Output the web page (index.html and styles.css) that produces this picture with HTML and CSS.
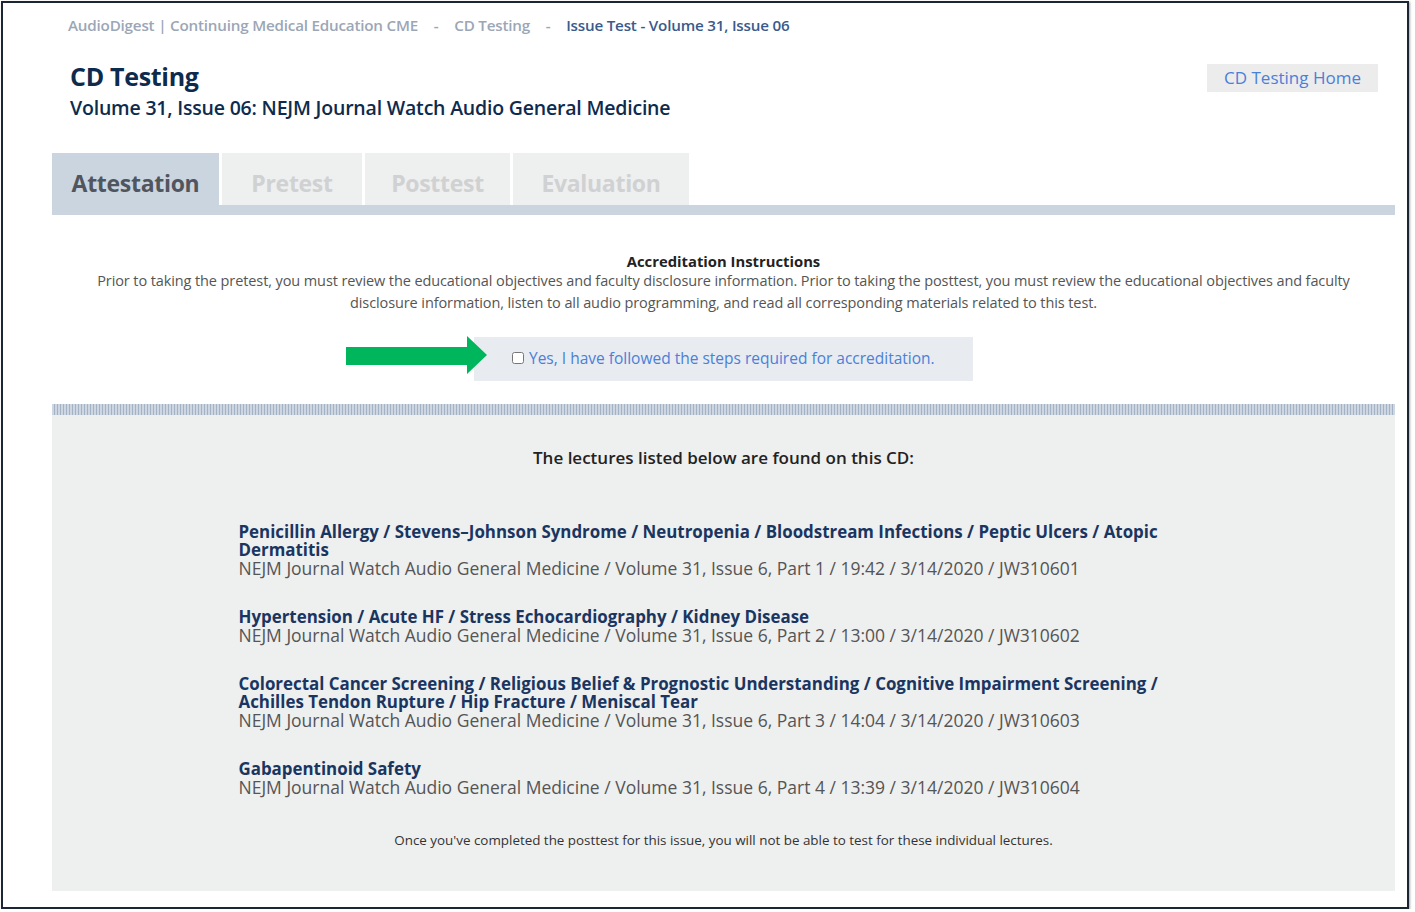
FILE: index.html
```html
<!DOCTYPE html>
<html lang="en">
<head>
  <meta charset="UTF-8" />
  <meta name="viewport" content="width=device-width, initial-scale=1" />
  <title>Issue Test | CD Testing</title>
  <link rel="stylesheet" href="styles.css">
</head>
<body>
  <div class="frame">
    <div class="page">
      <nav class="crumbs">
        <a href="#">AudioDigest | Continuing Medical Education CME</a>
        <span class="sep">-</span>
        <a href="#">CD Testing</a>
        <span class="sep">-</span>
        <a href="#" class="current">Issue Test - Volume 31, Issue 06</a>
      </nav>

      <header class="head">
        <div>
          <h1>CD Testing</h1>
          <h2>Volume 31, Issue 06: NEJM Journal Watch Audio General Medicine</h2>
        </div>
        <a href="#" class="btn-home">CD Testing Home</a>
      </header>

      <!-- Steps -->
      <ul class="tabs">
        <li class="tab tab-attest active">Attestation</li>
        <li class="tab tab-pre">Pretest</li>
        <li class="tab tab-post">Posttest</li>
        <li class="tab tab-eval">Evaluation</li>
      </ul>

      <section class="attest">
        <h3>Accreditation Instructions</h3>
        <p>Prior to taking the pretest, you must review the educational objectives and faculty disclosure information. Prior to taking the posttest, you must review the educational objectives and faculty disclosure information, listen to all audio programming, and read all corresponding materials related to this test.</p>
        <div class="confirm">
          <svg class="arrow" width="141" height="38" viewBox="0 0 141 38">
            <polygon points="0,11 121,11 121,0 141,19 121,38 121,29 0,29" fill="#00b65c" />
          </svg>
          <label><input type="checkbox" id="chkAttest" /> Yes, I have followed the steps required for accreditation.</label>
        </div>
      </section>

      <div class="stripes"></div>

      <!-- Lectures on this CD -->
      <section class="lectures">
        <h3>The lectures listed below are found on this CD:</h3>
        <ul class="lecture-list">
          <li>
            <div class="lec-title">Penicillin Allergy / Stevens–Johnson Syndrome / Neutropenia / Bloodstream Infections / Peptic Ulcers / Atopic Dermatitis</div>
            <div class="lec-meta">NEJM Journal Watch Audio General Medicine / Volume 31, Issue 6, Part 1 / 19:42 / 3/14/2020 / JW310601</div>
          </li>
          <li>
            <div class="lec-title">Hypertension / Acute HF / Stress Echocardiography / Kidney Disease</div>
            <div class="lec-meta">NEJM Journal Watch Audio General Medicine / Volume 31, Issue 6, Part 2 / 13:00 / 3/14/2020 / JW310602</div>
          </li>
          <li>
            <div class="lec-title">Colorectal Cancer Screening / Religious Belief &amp; Prognostic Understanding / Cognitive Impairment Screening / Achilles Tendon Rupture / Hip Fracture / Meniscal Tear</div>
            <div class="lec-meta">NEJM Journal Watch Audio General Medicine / Volume 31, Issue 6, Part 3 / 14:04 / 3/14/2020 / JW310603</div>
          </li>
          <li>
            <div class="lec-title">Gabapentinoid Safety</div>
            <div class="lec-meta">NEJM Journal Watch Audio General Medicine / Volume 31, Issue 6, Part 4 / 13:39 / 3/14/2020 / JW310604</div>
          </li>
        </ul>
        <p class="note">Once you've completed the posttest for this issue, you will not be able to test for these individual lectures.</p>
      </section>
    </div>
  </div>
</body>
</html>
```

FILE: styles.css
```css
* {
  box-sizing: border-box;
  margin: 0;
  padding: 0;
}
body {
  font-family: "Open Sans", Arial, sans-serif;
  background: #fff;
}
a {
  text-decoration: none;
}
ul {
  list-style: none;
}
.frame {
  width: 1408px;
  height: 908px;
  margin: 1px 0 0 1px;
  border: 2px solid #1c2533;
  box-shadow: 1px 1px 2px rgba(0, 0, 0, 0.35);
}
.page {
  padding: 0 12px 0 49px;
}
.crumbs {
  padding: 12px 0 0 16px;
  font-size: 15.2px;
  line-height: 20px;
  font-weight: 600;
  color: #9ba6b6;
  letter-spacing: -0.2px;
}
.crumbs a {
  color: #9ba6b6;
}
.crumbs .sep {
  margin: 0 12px;
}
.crumbs a.current {
  color: #3a5a8c;
}
.head {
  display: flex;
  justify-content: space-between;
  align-items: flex-start;
  padding: 0 17px 0 18px;
  margin-top: 24px;
  color: #0d2b4e;
}
.head h1 {
  font-size: 25px;
  line-height: 34px;
  font-weight: 700;
  letter-spacing: -0.3px;
}
.head h2 {
  margin-top: 2px;
  font-size: 19.5px;
  line-height: 26px;
  font-weight: 600;
  letter-spacing: -0.2px;
}
.btn-home {
  margin-top: 5px;
  background-color: #ececec;
  color: #4a80d8;
  font-size: 17px;
  line-height: 28px;
  padding: 0 17px;
}
.tabs {
  display: flex;
  gap: 3px;
  margin-top: 32px;
  border-bottom: 10px solid #cbd5e0;
}
.tab {
  height: 52px;
  line-height: 52px;
  padding-top: 4px;
  text-align: center;
  font-size: 23px;
  font-weight: 700;
  letter-spacing: -0.3px;
  background-color: #eeefef;
  color: #d0d1d2;
}
.tab.active {
  background-color: #cbd5e0;
  color: #50555e;
}
.tab-attest { width: 167px; }
.tab-pre { width: 140px; }
.tab-post { width: 145px; }
.tab-eval { width: 176px; }
.attest {
  text-align: center;
}
.attest h3 {
  margin-top: 37px;
  font-size: 14.8px;
  line-height: 18px;
  font-weight: 700;
  color: #222;
}
.attest p {
  padding: 0 40px;
  font-size: 14.5px;
  line-height: 22px;
  letter-spacing: -0.1px;
  color: #555;
}
.confirm {
  position: relative;
  width: 499px;
  height: 44px;
  margin: 23px auto 0;
  padding: 0 0 3px 38px;
  background-color: #e8ebf0;
  text-align: left;
  display: flex;
  align-items: center;
}
.confirm label {
  color: #4a80d8;
  font-size: 15.5px;
  display: flex;
  align-items: center;
  gap: 5px;
  white-space: nowrap;
}
.confirm input {
  width: 12px;
  height: 12px;
  margin: 0;
}
.arrow {
  position: absolute;
  left: -128px;
  top: -1px;
}
.stripes {
  height: 11px;
  margin-top: 23px;
  background: repeating-linear-gradient(90deg, #cdd6e1 0 2px, #a3b2c4 2px 3px);
}
.lectures {
  height: 476px;
  padding-top: 31px;
  background-color: #eeefef;
}
.lectures h3 {
  text-align: center;
  font-size: 17px;
  line-height: 24px;
  font-weight: 600;
  color: #222;
}
.lecture-list {
  width: 970px;
  margin: 53px auto 0;
}
.lecture-list li + li {
  margin-top: 31px;
}
.lec-title {
  font-size: 16.9px;
  line-height: 18px;
  font-weight: 700;
  color: #1a3560;
}
.lec-meta {
  font-size: 17.5px;
  line-height: 18px;
  color: #555;
}
.note {
  margin-top: 35px;
  text-align: center;
  font-size: 13.4px;
  line-height: 18px;
  color: #333;
}
```
